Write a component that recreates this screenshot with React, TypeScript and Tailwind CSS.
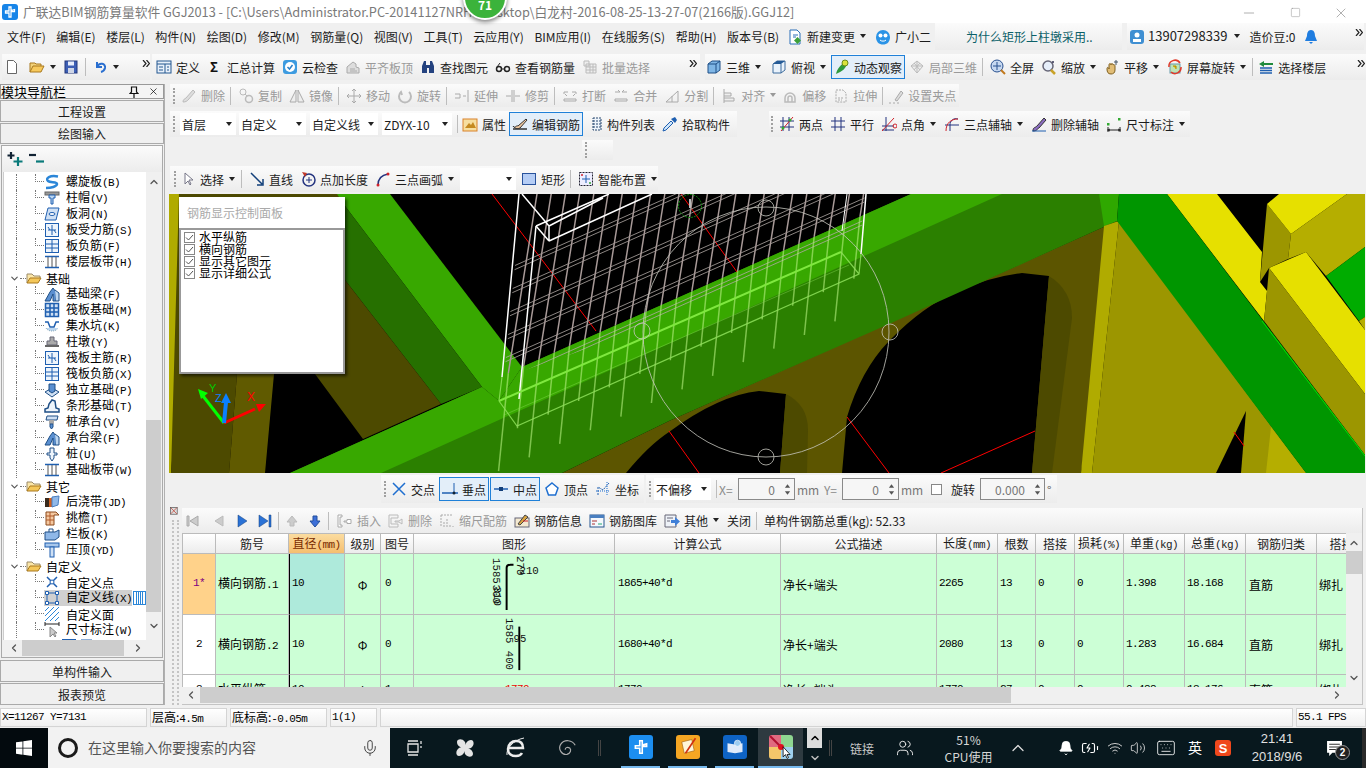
import React from 'react';
import { Mic, ChevronUp, ChevronDown, ChevronLeft, ChevronRight, Bell, Wifi, Volume2, Keyboard, BatteryCharging, Users, Minus, Square, X } from 'lucide-react';

const mono = "font-['Liberation_Mono',monospace]";
// 等宽小字，宽度按 6px 一个字符
const num = `${mono} text-[11px] tracking-[-0.6px]`;

// 工具栏图标
const ICONS: Record<string, React.ReactNode> = {
  new: <path d="M3.5 1.5h6l3 3v10h-9z" fill="#fff" stroke="#666" />,
  open: <><path d="M1 13V4h5l1 1h5v2" fill="#f3d27a" stroke="#a9791e" /><path d="M1 13l3-6h11l-3 6z" fill="#f7c95c" stroke="#a9791e" /></>,
  save: <><rect x="2" y="2" width="12" height="12" fill="#3d5fb5" stroke="#22367a" /><rect x="5" y="2.500" width="6" height="4" fill="#e8eefc" /><rect x="5" y="9" width="6" height="5" fill="#cfd6e6" /></>,
  undo: <path d="M5 3v5h5M5 8c2-5 9-4 8 1-.5 2-2 3.500-4 4" fill="none" stroke="#2a6fd0" strokeWidth="2" />,
  def: <><rect x="1" y="2" width="14" height="12" fill="#e8f0fa" stroke="#23578f" /><path d="M1 5h14M9 5v9M3 8h4M3 11h4M11 8h2M11 11h2" stroke="#23578f" /></>,
  sigma: <text x="3" y="12.500" fontSize="13" fontWeight="700" fill="#111">Σ</text>,
  cloud: <><rect x="1" y="1" width="14" height="14" rx="3" fill="#3d9be0" /><circle cx="8" cy="8" r="5" fill="#fff" /><path d="M5.500 8l2 2 3-4" fill="none" stroke="#2a7fc8" strokeWidth="1.500" /></>,
  flat: <path d="M2 14V8l6-5 3 2v3l3 1v5zM5 10h5M5 12h7" fill="#ddd" stroke="#aaa" />,
  bino: <path d="M2 14V7l2-5h2v4h4V2h2l2 5v7H9V9H7v5z" fill="#24427f" />,
  glasses: <><circle cx="4" cy="10" r="2.500" fill="none" stroke="#222" strokeWidth="1.500" /><circle cx="12" cy="10" r="2.500" fill="none" stroke="#222" strokeWidth="1.500" /><path d="M6.500 10h3M2 8l3-4" stroke="#222" /></>,
  batch: <path d="M2 2h5v5H2zM4 5h10v9H4zM4 8h10M4 11h10M8 5v9M11 5v9" fill="#eee" stroke="#bbb" />,
  cube: <><path d="M2 5l4-3h8v9l-4 3H2z" fill="#7fb6e6" stroke="#1f4f86" /><path d="M2 5h8v9M10 5l4-3" fill="none" stroke="#1f4f86" /></>,
  topv: <><path d="M2 5l4-3h8v9l-4 3H2z" fill="#e9f2fb" stroke="#3b6a9c" /><path d="M2 5l4-3h8l-4 3z" fill="#245a96" /><path d="M10 5v9" stroke="#3b6a9c" /></>,
  orbit: <><path d="M2 15C3 10 7 5 13 2c1 4-3 10-9 12z" fill="#2e9a3e" /><circle cx="11" cy="4" r="3" fill="#d9e23c" stroke="#6a8a1c" /></>,
  local: <path d="M2 7l6-5 6 5-6 7zM8 2v12M2 7h12M5 4l6 7M11 4l-6 7" fill="#eee" stroke="#bbb" />,
  full: <><circle cx="7" cy="7" r="6" fill="#c6d8f0" stroke="#29508f" /><path d="M7 3v8M3 7h8" stroke="#29508f" /><path d="M11 11l4 4" stroke="#c0781c" strokeWidth="2" /></>,
  zoom: <><circle cx="7" cy="7" r="5" fill="#e6eefa" stroke="#667" strokeWidth="1.500" /><path d="M10 11l4 4" stroke="#c9a227" strokeWidth="2.500" /><path d="M11 3h2M12 2v2" stroke="#335" /></>,
  pan: <><path d="M3 10c0-3 2-1 2 0V6c0-2 2-2 2 0 0-2 2-2 2 0 1-1 2 0 2 1v4c0 3-2 4-4 4-3 0-4-2-4-5z" fill="#e1bd76" stroke="#806020" /><path d="M12 1v5M10 3h4" stroke="#456" /></>,
  rot: <><rect x="3" y="5" width="10" height="9" fill="#bfe3b5" stroke="#69a" /><path d="M6 7h3v3" fill="#f0c000" stroke="#a80" /><path d="M2 8a6 6 0 0 1 11-4M14 8a6 6 0 0 1-10 5" fill="none" stroke="#e03a2a" strokeWidth="1.500" /></>,
  layers: <><path d="M1 5l5-3v2h9v2H6v2z" fill="#1f8a3c" /><path d="M2 9h12M2 11.500h12M2 14h12" stroke="#1f5fb0" strokeWidth="1.500" /></>,
  change: <><path d="M3 1h7l3 3v11H3z" fill="#fff" stroke="#2a6fb8" /><path d="M6 6h5M6 8h3" stroke="#2a6fb8" /><path d="M10.500 8l3.500 3.500-3.500 3.500L7 11.500z" fill="#3da13a" /></>,
  xiao: <><path d="M1 8a7 7 0 0 1 14 0c0 5-3 7.500-7 7.500S1 13 1 8z" fill="#2a93e6" /><circle cx="5.500" cy="6.500" r="2" fill="#fff" /><circle cx="10.500" cy="6.500" r="2" fill="#fff" /><path d="M5 11c1 1.500 5 1.500 6 0" stroke="#fff" fill="none" /></>,
  user: <><rect x="1" y="1" width="14" height="14" rx="3" fill="#3f8fd2" /><circle cx="8" cy="6" r="2.500" fill="#fff" /><rect x="4" y="10" width="8" height="3" fill="#fff" /></>,
  bellb: <path d="M8 1c3 0 4 3 4 6l2 5H2l2-5c0-3 1-6 4-6zM6 13h4l-2 2z" fill="#1f7de0" />,
  brush: <path d="M2 14c0-3 2-3 3-4l7-8 2 2-7 8c-1 1-2 2-5 2z" fill="#ddd" stroke="#bbb" />,
  copyc: <><circle cx="5" cy="4" r="3" fill="none" stroke="#bbb" /><circle cx="11" cy="11" r="3.500" fill="none" stroke="#bbb" strokeWidth="1.500" /><path d="M7 6l2 2" stroke="#bbb" /></>,
  mirror: <path d="M7 2v12H1zM9 2v12h6z" fill="#eee" stroke="#aaa" />,
  move: <path d="M8 1v14M1 8h14M6 3l2-2 2 2M6 13l2 2 2-2M3 6L1 8l2 2M13 6l2 2-2 2" fill="none" stroke="#aaa" />,
  rotg: <path d="M12 4a6 6 0 1 1-8 0l1 3" fill="none" stroke="#bbb" strokeWidth="2" />,
  extend: <path d="M1 6h5v4H1M9 8h3M14 2v12" fill="none" stroke="#aaa" />,
  trim: <path d="M1 8h5M10 8h5M7 2v12M9 2v12" fill="none" stroke="#aaa" />,
  brk: <path d="M2 4h4M10 4h4M2 4v2M14 4v2M2 11h12v2H2zM5 8l-2-2M11 8l2-2" fill="none" stroke="#aaa" />,
  merge: <path d="M2 4h5l-2-2M14 4H9l2-2M2 11h12v2H2z" fill="none" stroke="#aaa" />,
  split: <path d="M2 14l12-11v11zM8 8v6" fill="none" stroke="#aaa" />,
  align: <path d="M3 1v14M3 5h7v3H3M3 10h10v3H3" fill="#eee" stroke="#aaa" />,
  offset: <path d="M3 14v-4a5 5 0 0 1 10 0v4zM6 14v-4a2 2 0 0 1 4 0v4" fill="none" stroke="#bbb" strokeWidth="1.500" />,
  stretch: <path d="M3 2h7l3 3v9H3zM5 10h6M5 12h4" fill="#f4f4f4" stroke="#aaa" strokeDasharray="2 1" />,
  grip: <><path d="M1 15h2M5 15h2M9 15h2" stroke="#aaa" /><path d="M7 12l6-9 2 2-6 8z" fill="#ddd" stroke="#aaa" /></>,
  prop: <><rect x="1" y="3" width="14" height="12" fill="#f7dfa0" stroke="#d9822b" /><path d="M3 12l4-5 2 2 2-3 3 6" fill="#c58a20" /></>,
  edit: <><path d="M1 10c2 3 3-1 5 0l8-7 1 1-7 8c-2 1-5 1-7-2z" fill="#f0c8a0" stroke="#333" /><path d="M1 13h14" stroke="#333" strokeWidth="1.500" /></>,
  list: <path d="M2 3v0M2 6v0M2 9v0M2 12v0M6 2h8v12H6zM6 5h8M6 8h8M6 11h8" fill="#eef4fb" stroke="#27466f" strokeDasharray="2 1" />,
  pick: <><path d="M9 5l2 2-7 7-3 1 1-3z" fill="#cfe6fb" stroke="#1f5fb0" /><path d="M9 3l4 4 2-3-2-3z" fill="#1f5fb0" /></>,
  twop: <><path d="M4 1v14M10 1v14M1 5h14M1 11h14" stroke="#23337f" /><path d="M2 15L14 1" stroke="#d0222a" /><circle cx="4" cy="12" r="1.500" fill="#3a3" /><circle cx="11" cy="4" r="1.500" fill="#3a3" /></>,
  para: <path d="M5 1v14M11 1v14M1 5h14M1 11h14" stroke="#23337f" />,
  angle: <><path d="M5 1v14M1 10h12M1 14h12" stroke="#23337f" /><path d="M1 15L13 2" stroke="#d0222a" /><circle cx="14" cy="10" r="2" fill="none" stroke="#d0222a" /></>,
  arc3: <><path d="M6 15V9a6 6 0 0 1 8-6M1 9h14" fill="none" stroke="#23337f" /><path d="M2 15c0-8 5-12 12-12" fill="none" stroke="#d0222a" /></>,
  erase: <><path d="M2 15c0-4 2-3 4-5l7-8 2 2-7 8c-2 1-2 3-6 3z" fill="#8a6cc0" stroke="#333" /><path d="M1 15h14" stroke="#1f5fb0" /></>,
  dim: <><path d="M1 14h14M2 11v5M14 11v5M4 13l-2 1 2 1M12 13l2 1-2 1" fill="none" stroke="#222" /><rect x="1" y="7" width="2.500" height="2.500" fill="#3a3" /><rect x="12" y="2" width="2.500" height="2.500" fill="#3a3" /></>,
  cursor: <path d="M5 2v11l3-3 2 4 1-1-2-4h4z" fill="#fff" stroke="#778" />,
  linea: <path d="M2 2l11 11M8 14h6V8" fill="none" stroke="#123f7a" strokeWidth="1.500" />,
  ptadd: <><circle cx="9" cy="9" r="6" fill="none" stroke="#23337f" strokeWidth="1.500" /><path d="M9 6v6M6 9h6" stroke="#23337f" /><path d="M2 1l3 5 2-4" fill="#c0392b" /></>,
  arc: <><path d="M3 14C3 8 7 4 13 3" fill="none" stroke="#23337f" strokeWidth="1.500" /><circle cx="3" cy="14" r="1.500" fill="#d0222a" /><circle cx="13" cy="3" r="1.500" fill="#d0222a" /></>,
  rect: <rect x="1.500" y="2.500" width="13" height="11" fill="#b5cdf5" stroke="#28529c" />,
  smart: <><rect x="1.500" y="1.500" width="13" height="13" fill="#eef" stroke="#223" strokeDasharray="2 1" /><path d="M8 4v8M4 8h8" stroke="#1f5fb0" /><circle cx="4" cy="4" r="1" fill="#d0222a" /><circle cx="12" cy="12" r="1" fill="#3a3" /></>,
  cross: <path d="M2 2l12 12M14 2L2 14" stroke="#1f6fd0" strokeWidth="1.500" />,
  perp: <><path d="M0 12h16" stroke="#1f5fb0" strokeWidth="1.500" /><path d="M12 2v10" stroke="#1f5fb0" /><circle cx="12" cy="12" r="1.500" fill="#123" /></>,
  mid: <><path d="M1 8h14" stroke="#1f5fb0" strokeWidth="1.500" /><rect x="6" y="6" width="4" height="4" fill="#123f7a" /></>,
  penta: <path d="M8 2l6 5-2.500 7h-7L2 7z" fill="#fff" stroke="#1f6fd0" strokeWidth="1.500" />,
  coord: <><path d="M3 14V6l5 3 6-7" fill="none" stroke="#1f5fb0" strokeDasharray="2 1" /><path d="M1 10h14M12 1v14" stroke="#1f6fd0" strokeDasharray="1 1" /></>,
  first: <path d="M3 3h2v10H3zM14 3L6 8l8 5z" fill="#ccc" stroke="#aaa" />,
  prev: <path d="M12 3L4 8l8 5z" fill="#ccc" stroke="#bbb" />,
  next: <path d="M4 2l9 6-9 6z" fill="#2a72d6" stroke="#123f7a" strokeWidth=".5" />,
  last: <path d="M2 2l9 6-9 6zM12 2h2v12h-2z" fill="#2a72d6" stroke="#123f7a" strokeWidth=".5" />,
  up: <path d="M8 3l5 6h-3v4H6V9H3z" fill="#ccc" stroke="#bbb" />,
  down: <path d="M8 14L3 8h3V3h4v5h3z" fill="#3c6fd8" stroke="#234f9c" />,
  ins: <path d="M1 2h4v2H3v8h2v2H1zM7 8h3v-1.500h4v4h-4V9H7z" fill="#fff" stroke="#aaa" />,
  del: <path d="M1 2h9v3H3v6h7v3H1zM7 8h4l3-2v5l-3-2H7z" fill="#f4f4f4" stroke="#bbb" />,
  scale: <path d="M2 2h11M2 2v12M5 14V8M8 14V6M11 14v-3M14 14v-1" fill="none" stroke="#aaa" strokeDasharray="2 1" />,
  info: <><rect x="1" y="5" width="14" height="9" fill="#f4e9d0" stroke="#667" /><path d="M4 11l7-9 3 2-8 8z" fill="#d9a441" stroke="#444" /><path d="M9 8h5" stroke="#d0222a" /></>,
  lib: <><rect x="1" y="2" width="14" height="12" fill="#f5f8fc" stroke="#27568f" /><rect x="1" y="2" width="14" height="3" fill="#4a7fc0" /><path d="M3 8h5M3 11h3" stroke="#a33" /><path d="M9 11h4" stroke="#2a7" /></>,
  other: <><path d="M1 2h11v12H1z" fill="#eef2f8" stroke="#667" /><path d="M3 5h6M3 8h3" stroke="#667" /><path d="M7 7h4V4l5 4.500L11 13v-3H7z" fill="#3f7fd8" /></>,
  xbox: <><rect x="0.500" y="0.500" width="10" height="10" fill="#ddd" stroke="#555" /><path d="M1 1l9 9M10 1l-9 9" stroke="#c0392b" /></>,
  // 导航树
  spiral: <path d="M14 2.500C6 1 1 4 4 7c2 2 9 .5 9 3s-6 4-11 4" fill="none" stroke="#2b86d8" strokeWidth="2.500" />,
  capc: <><rect x="1" y="2" width="14" height="3" fill="#999" stroke="#666" /><path d="M5 5h6v3H9v6H7V8H5z" fill="#bcd6f0" stroke="#1f5fb0" /></>,
  holep: <><path d="M4 2h11l-3 12H1z" fill="#cfe0f4" stroke="#1f5fb0" /><ellipse cx="8" cy="8" rx="3" ry="1.500" fill="#fff" stroke="#1f5fb0" /></>,
  sq1: <><rect x="1.500" y="1.500" width="13" height="13" fill="#eef5fc" stroke="#1f5fb0" /><path d="M8 3v10M4 8h8M4 5l2 3M12 11l-2-3" stroke="#1f5fb0" /></>,
  sq2: <><rect x="1.500" y="1.500" width="13" height="13" fill="#eef5fc" stroke="#1f5fb0" /><path d="M2 6h12M2 10h12M8 2v12" stroke="#1f5fb0" /></>,
  band: <><path d="M1 2.500h14M1 13.500h14" stroke="#1f5fb0" strokeWidth="1.500" /><path d="M4 3v10M8 3v10M12 3v10" stroke="#555" /></>,
  folder: <><path d="M1 13V4h5l2 2h6v2" fill="#fbe6a8" stroke="#9a8a6a" /><path d="M1 13l3-5h11l-3 5z" fill="#f4c75a" stroke="#a9791e" /></>,
  beam: <><path d="M1 15l5-9 3-4 3 4v9h-3V8L6 15z" fill="#5a8fd0" stroke="#1f4f86" /><path d="M11 4l4 3v8h-3" fill="#bcd6f0" stroke="#1f4f86" /></>,
  raft: <><rect x="1.500" y="1.500" width="13" height="13" fill="#cfe0f4" stroke="#1f5fb0" strokeWidth="1.500" /><path d="M6 2v12M10 2v12M2 6h12M2 10h12" stroke="#1f5fb0" strokeWidth="1.500" /></>,
  pit: <><path d="M1 4h3l2 5h4l2-5h3" fill="none" stroke="#1f5fb0" strokeWidth="1.500" /><path d="M2 10c2 4 10 4 12 0" fill="#bcd6f0" stroke="#8ab" strokeDasharray="1 1" /></>,
  pier: <><path d="M6 3h4v4h3v4H3V7h3z" fill="#aaa" stroke="#667" /><rect x="1" y="11" width="14" height="2" fill="#666" /></>,
  iso: <><path d="M1 10l7-4 7 4-7 5z" fill="#cfe0f4" stroke="#1f4f86" /><path d="M5 2h6v7l-3 2-3-2z" fill="#5a8fd0" stroke="#1f4f86" /></>,
  strip: <path d="M1 14h14v-3l-3-1-1-7-3-1-3 4-1 4-3 1z" fill="#eef5fc" stroke="#1f4f86" strokeWidth="1.500" />,
  pile: <><path d="M3 2h11l-1 4H2z" fill="#cfe0f4" stroke="#1f4f86" /><rect x="5" y="6" width="5" height="4" fill="#aaa" /><path d="M6 10h3v3l-1.500 2L6 13z" fill="#5a8fd0" stroke="#1f4f86" /></>,
  pile2: <path d="M6 2h4v5h3v2h-3v3l-2 3-2-3V9H3V7h3z" fill="#eef5fc" stroke="#1f4f86" />,
  post: <><path d="M1 4h8v9H1z" fill="#3a2a1c" /><path d="M5 4h3v9H5z" fill="#d06020" /><path d="M8 3l7-1-1 9-6 2z" fill="#8fb8e8" stroke="#4a7fc0" /></>,
  eave: <><path d="M2 2h10l3 3h-5v10H2z" fill="#f4c8a0" stroke="#8a4a1c" /><path d="M2 6h8M2 10h8M6 2v13" stroke="#b05a2a" /></>,
  rail: <><path d="M1 6h10l4-2v7l-4 3H1z" fill="#8fb8e8" stroke="#1f4f86" /><path d="M5 6V3h4v3" fill="none" stroke="#1f4f86" /></>,
  press: <><rect x="1" y="1" width="14" height="4" fill="#a9c8ec" stroke="#1f5fb0" /><rect x="6" y="5" width="4" height="10" fill="#cfe0f4" stroke="#1f5fb0" /></>,
  cpt: <><path d="M3 3l10 10M13 3L3 13" stroke="#1f5fb0" strokeWidth="1.500" /><circle cx="8" cy="8" r="2" fill="#fff" stroke="#1f5fb0" /></>,
  cline: <><rect x="3" y="3" width="10" height="10" fill="none" stroke="#1f5fb0" /><path d="M1.500 1.500h3v3h-3zM11.500 1.500h3v3h-3zM1.500 11.500h3v3h-3zM11.500 11.500h3v3h-3z" fill="#fff" stroke="#1f5fb0" /></>,
  hatch: <path d="M1 5l4-4M1 10l9-9M1 15L15 1M6 15l9-9M11 15l4-4" stroke="#2b86d8" />,
  cdim: <><path d="M1 2h14M1 0v4M15 0v4" stroke="#222" /><path d="M6 5v10l3-3 2 3 1-1-2-3h3z" fill="#ccc" stroke="#888" /></>,
};

function Ic({ n, size = 'w-4 h-4' }: { n: string, size?: string }) {
  return <svg viewBox="0 0 16 16" className={`${size} shrink-0`}>{ICONS[n]}</svg>;
}

const Caret = ({ light }: { light?: boolean }) => (
  <svg viewBox="0 0 8 5" className="w-[8px] h-[5px] shrink-0"><path d="M1 0h6L4 4z" fill={light ? '#999' : '#222'} /></svg>
);

function Tool({ icon, label, gray, arrow, cn = '' }: { icon: string, label: string, gray?: boolean, arrow?: boolean, cn?: string }) {
  return (
    <div className={`flex items-center gap-[4px] whitespace-nowrap ${cn}`}>
      <Ic n={icon} />
      <span className={gray ? 'text-[#9a9a9a]' : 'text-[#1c1c1c]'}>{label}</span>
      {arrow && <Caret light={gray} />}
    </div>
  );
}

const Sep = () => <div className="w-px h-[18px] bg-[#bdbdbd] -ml-[2px] shrink-0" />;
const Handle = () => <div className="w-[2px] h-[16px] shrink-0 border-l-2 border-dotted border-[#a0a0a0]" />;

function Select({ w, label }: { w: string, label?: string }) {
  return (
    <div className={`${w} h-[22px] bg-white flex items-center justify-between pl-[2px] pr-[3px] shrink-0 whitespace-nowrap text-[#1c1c1c]`}>
      <span>{label}</span><Caret />
    </div>
  );
}

// 工具栏溢出按钮
const Chevrons = ({ cn = '' }: { cn?: string }) => (
  <svg viewBox="0 0 8 7" className={`w-[8px] h-[7px] shrink-0 self-start mt-[6px] ${cn}`}><path d="M1 0l3 3.500L1 7M4.500 0l3 3.500-3 3.500" fill="none" stroke="#222" strokeWidth="1.200" /></svg>
);

const bar = 'bg-linear-to-b from-[#fbfbfb] to-[#ececec] flex items-center shrink-0';
const active = 'border border-[#1f80d8] bg-[#e3eef9] -mx-[3px] px-[2px] h-[24px]';

const menus = ['文件(F)', '编辑(E)', '楼层(L)', '构件(N)', '绘图(D)', '修改(M)', '钢筋量(Q)', '视图(V)', '工具(T)', '云应用(Y)', 'BIM应用(I)', '在线服务(S)', '帮助(H)', '版本号(B)'];

function TopBars() {
  return (
    <>
      <div className="h-[23px] bg-white flex items-center relative shrink-0">
        <svg viewBox="0 0 16 16" className="w-4 h-4 ml-[2px] shrink-0">
          <rect width="16" height="16" rx="3" fill="#1684e8" />
          <path d="M7 3h2v3.500l3.500-1v2H9V13H7V9H3.500V7H7z" fill="none" stroke="#fff" strokeWidth="1.300" />
        </svg>
        <span className="ml-[5px] text-[#7a7a7a] text-[12.75px] whitespace-nowrap">广联达BIM钢筋算量软件 GGJ2013 - [C:\Users\Administrator.PC-20141127NRHI\Desktop\白龙村-2016-08-25-13-27-07(2166版).GGJ12]</span>
        <Minus className="w-4 h-4 text-[#888] absolute left-[1241px] top-[5px]" strokeWidth={1} />
        <Square className="w-[11px] h-[11px] text-[#888] absolute left-[1290px] top-[7px]" strokeWidth={1} />
        <X className="w-4 h-4 text-[#888] absolute left-[1333px] top-[5px]" strokeWidth={1} />
      </div>

      {/* 菜单行 */}
      <div className="h-[29px] flex items-center shrink-0 pl-[7px] pb-[2px] whitespace-nowrap text-[#1c1c1c]">
        <div className="flex gap-[10.6px] w-[780px] shrink-0">
          {menus.map((m) => <span key={m}>{m}</span>)}
        </div>
        <Tool icon="change" label="新建变更" arrow cn="w-[88px]" />
        <Tool icon="xiao" label="广小二" cn="w-[60px]" />
        <div className={`${bar} w-[187px] h-[27px] text-[#0b6068] pl-[31px]`}>为什么矩形上柱墩采用..</div>
        <div className={`${bar} w-[237px] h-[27px] ml-[5px] pl-[2px]`}>
          <Ic n="user" />
          <span className="ml-[3px] text-[13px] text-[#222]">13907298339</span>
          <div className="ml-[6px]"><Caret /></div>
          <span className="ml-[8px]">造价豆:0</span>
          <div className="ml-[8px]"><Ic n="bellb" /></div>
          <Chevrons cn="ml-[36px]" />
        </div>
      </div>

      {/* 主工具栏 */}
      <div className="h-[26px] mt-[2px] flex shrink-0">
        <div className={`${bar} w-[148px] ml-[2px] h-[26px] pl-[2px] gap-[6px]`}>
          <Ic n="new" />
          <div className="flex items-center gap-[4px] ml-[3px]"><Ic n="open" /><Caret /></div>
          <Ic n="save" />
          <div className="w-px h-[18px] bg-[#bdbdbd]" />
          <div className="flex items-center gap-[4px]"><Ic n="undo" /><Caret /></div>
          <Chevrons cn="ml-[16px]" />
        </div>
        <div className={`${bar} w-[548px] ml-[2px] h-[26px] pl-[4px] gap-[7px]`}>
          <Tool icon="def" label="定义" />
          <Tool icon="sigma" label="汇总计算" />
          <Tool icon="cloud" label="云检查" />
          <Tool icon="flat" label="平齐板顶" gray />
          <Tool icon="bino" label="查找图元" />
          <Tool icon="glasses" label="查看钢筋量" />
          <Tool icon="batch" label="批量选择" gray />
          <Chevrons cn="ml-[32px]" />
        </div>
        <div className={`${bar} w-[664px] ml-[5px] h-[26px] pl-[1px] gap-[7px]`}>
          <Tool icon="cube" label="三维" arrow />
          <Tool icon="topv" label="俯视" arrow cn="ml-[2px]" />
          <div className={active + ' flex items-center'}><Tool icon="orbit" label="动态观察" /></div>
          <Tool icon="local" label="局部三维" gray />
          <Sep />
          <Tool icon="full" label="全屏" />
          <Tool icon="zoom" label="缩放" arrow />
          <Tool icon="pan" label="平移" arrow />
          <Tool icon="rot" label="屏幕旋转" arrow />
          <Sep />
          <Tool icon="layers" label="选择楼层" cn="-ml-[2px]" />
          <Chevrons cn="ml-[24px]" />
        </div>
      </div>
    </>
  );
}

type Row = { t: string, k?: string, i: string, group?: boolean, sel?: boolean };

const tree: Row[] = [
  { t: '螺旋板', k: 'B', i: 'spiral' }, { t: '柱帽', k: 'V', i: 'capc' }, { t: '板洞', k: 'N', i: 'holep' },
  { t: '板受力筋', k: 'S', i: 'sq1' }, { t: '板负筋', k: 'F', i: 'sq2' }, { t: '楼层板带', k: 'H', i: 'band' },
  { t: '基础', i: 'folder', group: true },
  { t: '基础梁', k: 'F', i: 'beam' }, { t: '筏板基础', k: 'M', i: 'raft' }, { t: '集水坑', k: 'K', i: 'pit' },
  { t: '柱墩', k: 'Y', i: 'pier' }, { t: '筏板主筋', k: 'R', i: 'sq1' }, { t: '筏板负筋', k: 'X', i: 'sq2' },
  { t: '独立基础', k: 'P', i: 'iso' }, { t: '条形基础', k: 'T', i: 'strip' }, { t: '桩承台', k: 'V', i: 'pile' },
  { t: '承台梁', k: 'F', i: 'beam' }, { t: '桩', k: 'U', i: 'pile2' }, { t: '基础板带', k: 'W', i: 'band' },
  { t: '其它', i: 'folder', group: true },
  { t: '后浇带', k: 'JD', i: 'post' }, { t: '挑檐', k: 'T', i: 'eave' }, { t: '栏板', k: 'K', i: 'rail' }, { t: '压顶', k: 'YD', i: 'press' },
  { t: '自定义', i: 'folder', group: true },
  { t: '自定义点', i: 'cpt' }, { t: '自定义线', k: 'X', i: 'cline', sel: true }, { t: '自定义面', i: 'hatch' }, { t: '尺寸标注', k: 'W', i: 'cdim' },
];

function TreeRow({ r }: { r: Row }) {
  if (r.group) {
    return (
      <div className="h-4 flex items-center whitespace-nowrap">
        <ChevronDown className="w-[11px] h-[11px] ml-[5px] text-[#555] shrink-0" strokeWidth={2.500} />
        <div className="w-[6px] border-b border-dotted border-[#777]" />
        <Ic n={r.i} />
        <span className="ml-[4px] text-black">{r.t}</span>
      </div>
    );
  }
  return (
    <div className="h-4 flex items-stretch whitespace-nowrap">
      <div className="w-[12px] shrink-0" />
      <div className="w-[19px] border-l border-dotted border-[#777] shrink-0" />
      <div className="w-[9px] h-[8px] border-l border-b border-dotted border-[#777] shrink-0" />
      <div className={`flex items-center h-4 ${r.sel ? 'bg-[#d0d0d0] w-[88px]' : ''}`}>
        <Ic n={r.i} />
        <span className="ml-[6px] text-black">{r.t}{r.k && <span className={num}>({r.k})</span>}</span>
      </div>
      {r.sel && (
        <div className="w-[13px] h-[14px] mt-px ml-px border border-[#2b86d8] flex justify-around px-[1px] shrink-0">
          <div className="w-[3px] border-x border-[#2b86d8]" /><div className="w-[3px] border-x border-[#2b86d8]" />
        </div>
      )}
    </div>
  );
}

function SideNav() {
  const btn = 'border border-[#aaa] flex items-center justify-center text-[#1c1c1c] shrink-0';
  return (
    <div className="w-[165px] h-[621px] shrink-0 flex flex-col border-r border-[#b0b0b0]">
      <div className="h-[15px] border border-[#999] flex items-center justify-between text-[13px] leading-none text-black shrink-0 pr-[4px] bg-[#f4f4f4]">
        <span>模块导航栏</span>
        <div className="flex items-center gap-[9px]">
          <svg viewBox="0 0 10 12" className="w-[10px] h-[12px]"><path d="M2.500 1h5v5l1.500 1.500H1L2.500 6zM5 7.500V12" fill="none" stroke="#111" strokeWidth="1.200" /></svg>
          <X className="w-[11px] h-[11px]" strokeWidth={1.500} />
        </div>
      </div>
      <div className={`${btn} h-[22px] mt-[1px]`}>工程设置</div>
      <div className={`${btn} h-[21px] mt-[1px]`}>绘图输入</div>
      <div className="flex-1 border border-[#aaa] mt-[1px] mb-[2px] mx-[1px] flex flex-col min-h-0">
        <div className={`${bar} h-[26px] pl-[5px] gap-[3px]`}>
          <svg viewBox="0 0 18 16" className="w-[18px] h-[16px]"><path d="M4 1v7M.5 4.500h7" stroke="#123" strokeWidth="2.200" fill="none" /><path d="M11 6v9M6.500 10.500h9" stroke="#0a7a7a" strokeWidth="2.200" fill="none" /></svg>
          <svg viewBox="0 0 18 16" className="w-[18px] h-[16px]"><path d="M1 4h7" stroke="#123" strokeWidth="2.200" /><path d="M8 10.500h8" stroke="#0a7a7a" strokeWidth="2.200" /></svg>
        </div>
        <div className="flex-1 flex min-h-0 mx-[1px]">
          <div className="w-[143px] bg-white overflow-hidden pt-[2px] border-l border-[#ccc]">
            {tree.map((r) => <TreeRow key={r.t + r.k + r.i} r={r} />)}
            <div className="h-4 flex items-center pl-[41px]"><Ic n="folder" /><Ic n="sq2" /><Ic n="holep" /></div>
          </div>
          <div className="w-[15px] bg-[#f0f0f0] flex flex-col items-center shrink-0 pt-[4px]">
            <ChevronUp className="w-3 h-3 text-[#555] shrink-0" strokeWidth={2.500} />
            <div className="h-[232px] shrink-0" />
            <div className="flex-1 w-full bg-[#cdcdcd]" />
            <ChevronDown className="w-3 h-3 text-[#555] shrink-0 my-[8px]" strokeWidth={2.500} />
          </div>
        </div>
        <div className="h-[16px] bg-[#f0f0f0] flex items-center shrink-0 mb-[1px]">
          <ChevronLeft className="w-3 h-3 ml-[6px] text-[#555] shrink-0" strokeWidth={2.500} />
          <div className="w-[102px] h-full bg-[#cdcdcd] ml-[2px]" />
          <ChevronRight className="w-3 h-3 ml-[8px] text-[#555] shrink-0" strokeWidth={2.500} />
        </div>
      </div>
      <div className={`${btn} h-[22px]`}>单构件输入</div>
      <div className={`${btn} h-[22px] mt-[1px]`}>报表预览</div>
    </div>
  );
}

// 钢筋网
const bars = Array.from({ length: 24 }, (_, i) => {
  const xt = 538 + 14.2 * i;
  const ye = (585.9 - 0.445 * xt) / 0.9288;
  const xe = xt - 0.16 * (ye - 194);
  const len = i % 2 ? 62 : 98;
  return { xt, xe, ye, x2: xe - 0.1 * len, y2: ye + len };
});
const meshY = [197, 201, 219, 223, 241, 245, 263, 267, 285, 289, 307, 311];

function Scene() {
  return (
    <svg viewBox="170 194 1196 279" className="w-full h-full block">
      <rect x="170" y="194" width="1196" height="279" fill="#000" />
      <polygon points="170,194 185,194 180,374 172,473 170,473" fill="#b0ab00" />
      <polygon points="180,194 346,194 346,374 238,374 230,473 172,473" fill="#4d4a00" />
      <polygon points="238,374 275,374 266,473 230,473" fill="#605a00" />
      <polygon points="338,194 391,194 523,367 500,401 483,387 346,206" fill="#38a800" />
      <polygon points="346,206 483,387 442,404 346,280" fill="#267000" />
      <polygon points="346,280 442,404 364,439 316,374 346,374" fill="#4d4a00" />
      {/* 下方拱 */}
      <polygon points="563,473 670,421 1118,221 1082,473" fill="#5c5500" />
      <path d="M843 473 L848 417 Q862 370 890 341 Q925 305 960 291 Q990 277 1023 273 L1050 276 L1033 473 Z" fill="#000" />
      <path d="M1050 276 Q1073 290 1073 318 L1053 473 L1033 473 Z" fill="#4d4a00" />
      <path d="M627 473 Q650 445 670 432 Q720 395 760 391 L787 394 L781 473 Z" fill="#000" />
      <path d="M787 394 Q809 405 809 430 L808 473 L781 473 Z" fill="#4d4a00" />
      {/* 主梁 */}
      <polygon points="291,473 483,387 500,401 523,367 912,194 1100,194 1118,221 890,324 670,421 563,473" fill="#2b8000" />
      <polygon points="291,473 483,387 500,401 523,367 912,194 1003,194 382,473" fill="#38a800" />
      <polygon points="1100,194 1120,194 1118,221 1105,226" fill="#2fa800" />
      {/* 右侧黄色构件 */}
      <polygon points="1120,221 1307,473 1093,473" fill="#9c9600" />
      <polygon points="1105,226 1120,221 1093,473 1082,473" fill="#b0ab00" />
      <polygon points="1247,411 1217,473 1242,473" fill="#000" />
      <polygon points="1272,427 1307,473 1267,473" fill="#b5ae00" />
      <polygon points="1168,194 1218,194 1263,252 1261,282 1268,291 1265,321" fill="#e6e000" />
      <polygon points="1268,204 1292,234 1289,259 1270,268 1261,282" fill="#9c9600" />
      <polygon points="1268,204 1280,194 1348,194 1292,234" fill="#e6e000" />
      <polygon points="1292,234 1348,194 1366,194 1366,247 1327,276 1307,252 1289,259" fill="#b5ae00" />
      <polygon points="1366,247 1327,276 1360,321 1366,317" fill="#00ac00" />
      <polygon points="1360,321 1366,317 1366,330" fill="#b5ae00" />
      <polygon points="1270,268 1307,252 1366,330 1366,394" fill="#e6e000" />
      <polygon points="1270,268 1366,394 1366,455 1265,321 1268,291" fill="#9c9600" />
      <polygon points="1120,194 1168,194 1366,455 1366,473 1307,473 1118,221" fill="#009600" />
      <line x1="1263" y1="321" x2="1366" y2="456" stroke="#00e000" />
      {/* 红线 */}
      <g stroke="#f00" strokeWidth="1" fill="none">
        <line x1="493" y1="194" x2="597" y2="331" />
        <line x1="682" y1="194" x2="738" y2="272" />
        <line x1="670" y1="431" x2="700" y2="473" />
        <line x1="848" y1="417" x2="890" y2="473" />
        <line x1="1036" y1="431" x2="942" y2="473" />
        <line x1="1235" y1="432" x2="1245" y2="446" />
      </g>
      {/* 钢筋网 */}
      <clipPath id="wall"><polygon points="523,194 505,377 860,256 866,194" /></clipPath>
      <g clipPath="url(#wall)" stroke="#b0a8a4" strokeWidth="1" opacity=".8">
        {meshY.map((y) => <line key={y} x1="500" y1={y + 75.6} x2="870" y2={y - 89} />)}
      </g>
      {bars.map((b) => (
        <g key={b.xt} strokeWidth="1.500">
          <line x1={b.xt} y1="194" x2={b.xe} y2={b.ye} stroke="#a89a98" />
          <line x1={b.xe} y1={b.ye} x2={b.x2} y2={b.y2} stroke="#b6f080" opacity=".6" />
        </g>
      ))}
      <g stroke="#fff" fill="none">
        <path d="M520 194L503 377M537 226L520 399M867 194L862 254" strokeWidth="1.500" />
        <path d="M848 194L843 231" />
        <path d="M537 226L610 194M550 241L653 194M550 226L604 198M537 226L550 241M550 226V241M523 194L550 226" strokeWidth="1.500" />
      </g>
      <g fill="none" stroke="#8ee05a">
        <path d="M500 401L518 426L860 274L862 254M842 252L860 274M500 401L503 377" strokeWidth="1.200" opacity=".85" />
        <path d="M500 401L842 252" stroke="#7fe83f" strokeWidth="2" />
        <path d="M505 415L850 265" strokeWidth="1" opacity=".4" />
      </g>
      {/* 圆 */}
      <g fill="none" stroke="#c8c8c0" strokeWidth="1" opacity=".8">
        <ellipse cx="767" cy="332" rx="123" ry="125" />
        <circle cx="767" cy="457" r="8" />
        <circle cx="891" cy="332" r="8" />
        <circle cx="643" cy="331" r="8" />
        <circle cx="767" cy="208" r="8" />
      </g>
      <circle cx="691" cy="206" r="11.500" fill="none" stroke="#0a8a0a" strokeDasharray="2 1" />
      <path d="M691 199v9" stroke="#bbb" strokeWidth="2" />
      {/* 坐标轴 */}
      <g strokeWidth="3" fill="none">
        <line x1="225" y1="423" x2="204" y2="396" stroke="#0f0" />
        <line x1="225" y1="423" x2="256" y2="409" stroke="#f00" />
        <line x1="225" y1="423" x2="227" y2="402" stroke="#0a80ff" strokeWidth="4" />
      </g>
      <polygon points="199,389 209,393 202,399" fill="#0f0" />
      <polygon points="267,404 257,404 260,412" fill="#f00" />
      <polygon points="227,393 222,403 232,403" fill="#0a80ff" />
      <text x="248" y="401" fontSize="12" fill="#f00" className="font-['Liberation_Sans',sans-serif]">X</text>
      <text x="210" y="392" fontSize="11" fill="#0c0" className="font-['Liberation_Sans',sans-serif]">Y</text>
      <text x="216" y="402" fontSize="11" fill="#0a80ff" className="font-['Liberation_Sans',sans-serif]">Z</text>
    </svg>
  );
}

function RebarPanel() {
  const items = ['水平纵筋', '横向钢筋', '显示其它图元', '显示详细公式'];
  return (
    <div className="absolute left-[10px] top-[3px] w-[166px] h-[177px] bg-white shadow-[2px_2px_3px_rgba(0,0,0,.6)] flex flex-col">
      <div className="h-[31px] pl-[8px] flex items-center text-[12px] text-[#aaa] shrink-0">钢筋显示控制面板</div>
      <div className="flex-1 border-2 border-[#999] pl-[3px] pt-[1px]">
        {items.map((t) => (
          <div key={t} className="h-[12px] flex items-center gap-[4px] leading-[12px] text-black whitespace-nowrap">
            <svg viewBox="0 0 11 11" className="w-[11px] h-[11px] shrink-0"><rect x=".5" y=".5" width="10" height="10" fill="#fff" stroke="#888" /><path d="M2 5.500l2.500 2.500 4.500-5" fill="none" stroke="#555" /></svg>
            <span>{t}</span>
          </div>
        ))}
      </div>
    </div>
  );
}

function NumInput({ w, v }: { w: string, v: string }) {
  return (
    <div className={`${w} h-[22px] border border-[#8a8a8a] bg-[#f6f6f6] flex items-center justify-end shrink-0`}>
      <span className="text-[#777] mr-[9px]">{v}</span>
      <div className="flex flex-col gap-[3px] mr-[3px]">
        <svg viewBox="0 0 8 4" className="w-[7px] h-[4px]"><path d="M4 0l3 4H1z" fill="#555" /></svg>
        <svg viewBox="0 0 8 4" className="w-[7px] h-[4px]"><path d="M4 4L1 0h6z" fill="#555" /></svg>
      </div>
    </div>
  );
}

function SnapBar() {
  return (
    <div className="h-[28px] mt-[2px] flex shrink-0 pl-[212px]">
      <div className={`${bar} w-[263px] pl-[3px] gap-[7px] h-[28px]`}>
        <Handle />
        <Tool icon="cross" label="交点" cn="-ml-[2px]" />
        <div className={active + ' flex items-center'}><Tool icon="perp" label="垂点" /></div>
        <div className={active + ' flex items-center'}><Tool icon="mid" label="中点" /></div>
        <Tool icon="penta" label="顶点" />
        <Tool icon="coord" label="坐标" />
      </div>
      <div className={`${bar} w-[411px] ml-[2px] pl-[3px] h-[28px]`}>
        <Handle />
        <div className="ml-[3px]"><Select w="w-[57px]" label="不偏移" /></div>
        <div className="w-px h-[18px] bg-[#bdbdbd] ml-[5px]" />
        <span className="ml-[2px] text-[#8a8a8a] w-[19px]">X=</span>
        <NumInput w="w-[57px]" v="0" />
        <span className={`ml-[2px] text-[#777] w-[27px]`}>mm</span>
        <span className="text-[#8a8a8a] w-[18px]">Y=</span>
        <NumInput w="w-[57px]" v="0" />
        <span className="ml-[2px] text-[#777] w-[30px]">mm</span>
        <div className="w-[11px] h-[11px] border border-[#888] bg-white shrink-0" />
        <span className="ml-[9px] text-[#1c1c1c]">旋转</span>
        <div className="ml-[5px]"><NumInput w="w-[65px]" v="0.000" /></div>
        <span className="ml-[2px] text-[#555]">°</span>
      </div>
    </div>
  );
}

const cols = 'grid-cols-[33px_73px_56px_36px_33px_201px_166px_156px_61px_38px_39px_49px_61px_61px_71px_74px]';
const cell = 'border-r border-b border-[#bbb] flex items-center overflow-hidden whitespace-nowrap';
const heads: [string, string?][] = [['', ''], ['筋号'], ['直径', 'mm'], ['级别'], ['图号'], ['图形'], ['计算公式'], ['公式描述'], ['长度', 'mm'], ['根数'], ['搭接'], ['损耗', '%'], ['单重', 'kg'], ['总重', 'kg'], ['钢筋归类'], ['搭接形式']];

type Data = { idx: string, name: string, d: string, f: string, len: string, n: string, w1: string, w2: string, tail: string };
const rows: Data[] = [
  { idx: '1*', name: '横向钢筋.1', d: '0', f: '1865+40*d', len: '2265', n: '13', w1: '1.398', w2: '18.168', tail: '直筋' },
  { idx: '2', name: '横向钢筋.2', d: '0', f: '1680+40*d', len: '2080', n: '13', w1: '1.283', w2: '16.684', tail: '直筋' },
  { idx: '3', name: '水平纵筋.1', d: '1', f: '1770', len: '1770', n: '27', w1: '0.488', w2: '13.176', tail: '直筋' },
];

function Fig({ i }: { i: number }) {
  if (i === 0) {
    return (
      <svg className={`w-full h-full ${mono}`} viewBox="0 0 201 61" fontSize="11" fill="#111">
        <path d="M93 57V14q0-3 4-3h3" stroke="#000" strokeWidth="2" fill="none" />
        <text transform="translate(79 4) rotate(90)">1585</text>
        <text transform="translate(79 31) rotate(90)">300</text>
        <text transform="translate(80 33) rotate(90)">310</text>
        <text transform="translate(104 2) rotate(90)">270</text>
        <text x="106" y="20">210</text>
      </svg>
    );
  }
  if (i === 1) {
    return (
      <svg className={`w-full h-full ${mono}`} viewBox="0 0 201 61" fontSize="11" fill="#111">
        <path d="M106 57V12" stroke="#000" strokeWidth="2" fill="none" />
        <text transform="translate(92 3) rotate(90)">1585</text>
        <text x="100" y="28">95</text>
        <text transform="translate(92 37) rotate(90)">400</text>
      </svg>
    );
  }
  return <div className={`${num} text-[#e00] pl-[91px]`}>1770</div>;
}

function Table() {
  return (
    <div className="flex">
      <div className={`w-[1164px] h-[154px] overflow-hidden grid ${cols} grid-rows-[20px_61px_60px_30px] bg-white border-t border-l border-[#bbb] shrink-0`}>
        {heads.map(([t, u], i) => (
          <div key={i} className={`${cell} justify-center ${i === 2 ? 'bg-linear-to-b from-[#fbdca0] to-[#f5bf6f] text-[#7a2b00]' : 'bg-linear-to-b from-white to-[#ececec] text-[#1c1c1c]'}`}>
            <span>{t}{u && <span className={num}>({u})</span>}</span>
          </div>
        ))}
        {rows.map((r, i) => (
          <React.Fragment key={r.idx}>
            <div className={`${cell} justify-center ${num} ${i === 0 ? 'bg-[#ffd28a] text-[#800080]' : 'bg-white text-black'}`}>{r.idx}</div>
            <div className={`${cell} pl-[2px] bg-[#ccffd6] text-black`}><span>{r.name.slice(0, -2)}<span className={num}>{r.name.slice(-2)}</span></span></div>
            <div className={`${cell} pl-[2px] border-l border-l-black ${num} ${i === 0 ? 'bg-[#aeeadb]' : 'bg-[#ccffd6]'}`}>10</div>
            <div className={`${cell} justify-center bg-[#ccffd6] text-[12px]`}>Φ</div>
            <div className={`${cell} pl-[4px] bg-[#ccffd6] ${num}`}>{r.d}</div>
            <div className={`${cell} bg-[#ccffd6]`}><Fig i={i} /></div>
            <div className={`${cell} pl-[3px] bg-[#ccffd6] ${num}`}>{r.f}</div>
            <div className={`${cell} pl-[2px] bg-[#ccffd6]`}>净长+端头</div>
            <div className={`${cell} pl-[2px] bg-[#ccffd6] ${num}`}>{r.len}</div>
            <div className={`${cell} pl-[2px] bg-[#ccffd6] ${num}`}>{r.n}</div>
            <div className={`${cell} pl-[2px] bg-[#ccffd6] ${num}`}>0</div>
            <div className={`${cell} pl-[2px] bg-[#ccffd6] ${num}`}>0</div>
            <div className={`${cell} pl-[2px] bg-[#ccffd6] ${num}`}>{r.w1}</div>
            <div className={`${cell} pl-[2px] bg-[#ccffd6] ${num}`}>{r.w2}</div>
            <div className={`${cell} pl-[3px] bg-[#ccffd6]`}>{r.tail}</div>
            <div className={`${cell} pl-[2px] bg-[#ccffd6]`}>绑扎</div>
          </React.Fragment>
        ))}
      </div>
      <div className="w-[16px] h-[154px] bg-[#f0f0f0] flex flex-col items-center shrink-0">
        <ChevronUp className="w-3 h-3 text-[#555] mt-[4px] shrink-0" strokeWidth={2.500} />
        <div className="w-full h-[23px] bg-[#cdcdcd] mt-[2px] shrink-0" />
        <div className="flex-1" />
        <ChevronDown className="w-3 h-3 text-[#555] mb-[3px] shrink-0" strokeWidth={2.500} />
      </div>
    </div>
  );
}

function GridPanel() {
  return (
    <div className="flex mt-[2px] h-[200px] shrink-0">
      <div className="w-[13px] shrink-0 flex flex-col items-center">
        <div className="mt-[2px]"><Ic n="xbox" size="w-[11px] h-[11px]" /></div>
        <div className="flex-1 mt-[2px] w-[7px] border-x-2 border-dotted border-[#c4c4c4]" />
      </div>
      <div className="w-[1181px] shrink-0 flex flex-col border-r border-b border-[#c4c4c4] mt-[3px]">
        <div className={`${bar} h-[25px] pl-[2px] gap-[7px]`}>
          <Ic n="first" />
          <div className="ml-[4px]"><Ic n="prev" /></div>
          <Ic n="next" />
          <Ic n="last" />
          <Sep />
          <div className="-ml-[2px]"><Ic n="up" /></div>
          <Ic n="down" />
          <Sep />
          <Tool icon="ins" label="插入" gray cn="ml-[1px]" />
          <Tool icon="del" label="删除" gray />
          <Tool icon="scale" label="缩尺配筋" gray />
          <Tool icon="info" label="钢筋信息" />
          <Tool icon="lib" label="钢筋图库" />
          <Tool icon="other" label="其他" arrow />
          <span className="text-[#1c1c1c]">关闭</span>
          <Sep />
          <span className="text-[#1c1c1c] whitespace-nowrap">单构件钢筋总重(kg): 52.33</span>
        </div>
        <Table />
        <div className="h-[16px] bg-[#f0f0f0] flex items-center shrink-0">
          <ChevronLeft className="w-3 h-3 ml-[3px] text-[#555] shrink-0" strokeWidth={2.500} />
          <div className="w-[811px] h-full bg-[#cdcdcd] ml-[3px]" />
          <ChevronRight className="w-3 h-3 ml-[320px] text-[#555] shrink-0" strokeWidth={2.500} />
        </div>
      </div>
    </div>
  );
}

function StatusBar() {
  const s = 'h-[19px] border border-[#d4d4d4] bg-linear-to-b from-white to-[#f0f0f0] flex items-center pl-[1px] text-black whitespace-nowrap shrink-0';
  return (
    <div className="h-[19px] mt-[3px] flex gap-[3px] shrink-0">
      <div className={`${s} w-[147px] ${num}`}>X=11267 Y=7131</div>
      <div className={`${s} w-[77px]`}><span>层高:<span className={num}>4.5m</span></span></div>
      <div className={`${s} w-[97px]`}><span>底标高:<span className={num}>-0.05m</span></span></div>
      <div className={`${s} w-[47px] ${num}`}>1(1)</div>
      <div className={`${s} w-[913px]`} />
      <div className={`${s} w-[70px] ${num}`}>55.1 FPS</div>
    </div>
  );
}

function AppTile({ color, children }: { color: string, children: React.ReactNode }) {
  return <div className={`w-6 h-6 rounded-[3px] ${color} flex items-center justify-center overflow-hidden`}>{children}</div>;
}

const slot = 'h-full flex items-center justify-center shrink-0';
const pinned = 'h-full flex items-center justify-center border-b-[2px] border-[#76b9ed] shrink-0';

function Taskbar() {
  return (
    <div className="h-[40px] mt-[1px] bg-[#08181e] flex items-stretch text-[#e6e6e6] shrink-0">
      <div className={`${slot} w-[48px] bg-[#030a0e]`}>
        <svg viewBox="0 0 16 16" className="w-4 h-4"><path d="M0 2.300l6.500-.9v6.300H0zM7.300 1.300L16 0v7.700H7.300zM0 8.400h6.500v6.300L0 13.800zM7.300 8.400H16V16l-8.700-1.200z" fill="#fff" /></svg>
      </div>
      <div className="w-[342px] bg-[#f2f2f2] flex items-center shrink-0">
        <div className="ml-[10px] w-[20px] h-[20px] rounded-full border-[3px] border-[#1a1a1a] shrink-0" />
        <span className="ml-[10px] text-[14px] text-[#555] whitespace-nowrap">在这里输入你要搜索的内容</span>
        <Mic className="ml-[105px] w-[18px] h-[18px] text-[#444] shrink-0" strokeWidth={1.300} />
      </div>
      <div className={`${slot} w-[50px]`}>
        <svg viewBox="0 0 18 16" className="w-[18px] h-4"><path d="M2 1h10M2 4h10v8H2zM2 15h10M15 1v3M15 6v2" fill="none" stroke="#e6e6e6" strokeWidth="1.300" /></svg>
      </div>
      <div className={`${slot} w-[50px]`}>
        <svg viewBox="0 0 22 22" className="w-[22px] h-[22px]"><path d="M11 11C7 11 3 9 3 5c0-3 5-4 8 0 1 2 0 4 0 6zm0 0c0-4 2-8 6-8 3 0 4 5 0 8-2 1-4 0-6 0zm0 0c4 0 8 2 8 6 0 3-5 4-8 0-1-2 0-4 0-6zm0 0c0 4-2 8-6 8-3 0-4-5 0-8 2-1 4 0 6 0z" fill="#e4e4e4" /></svg>
      </div>
      <div className={`${slot} w-[52px]`}>
        <svg viewBox="0 0 22 22" className="w-[22px] h-[22px]"><path d="M4 11h14c0-5-3-7-7-7s-8 3-8 8 4 7 8 7c3 0 5-1 6-3" fill="none" stroke="#ececec" strokeWidth="2.500" /><path d="M2 18C1 12 8 3 19 1" fill="none" stroke="#ececec" strokeWidth="1" /></svg>
      </div>
      <div className={`${slot} w-[50px]`}>
        <svg viewBox="0 0 22 22" className="w-5 h-5"><path d="M20 8C17 2 8 1 4 7c-3 5 1 12 7 11 4-1 5-5 3-7-2-1-5-1-5 2" fill="none" stroke="#aaa" strokeWidth="1.300" /></svg>
      </div>
      <div className={`${slot} w-[14px]`}><div className="w-[3px] h-[16px] border-x border-[#444]" /></div>
      <div className="w-[15px] shrink-0" />
      <div className={`${pinned} w-[39px]`}>
        <AppTile color="bg-[#1c8ef0]"><svg viewBox="0 0 16 16" className="w-5 h-5"><path d="M7 3h2v3.500l3.500-1v2H9V13H7V9H3.500V7H7z" fill="none" stroke="#fff" strokeWidth="1.300" /></svg></AppTile>
      </div>
      <div className="w-[8px] shrink-0" />
      <div className={`${pinned} w-[39px]`}>
        <AppTile color="bg-[#f5a623]"><svg viewBox="0 0 16 16" className="w-5 h-5"><path d="M3 4l8-2 2 9-8 2z" fill="#fff6d8" stroke="#a06010" strokeWidth=".5" /><path d="M6 13L14 1" stroke="#d03010" strokeWidth="1.300" /></svg></AppTile>
      </div>
      <div className="w-[8px] shrink-0" />
      <div className={`${pinned} w-[39px]`}>
        <AppTile color="bg-[#0e63c4]"><svg viewBox="0 0 16 16" className="w-5 h-5"><path d="M2 5l6 1 6-1v7l-6 1-6-1z" fill="#dfeafa" /><circle cx="10" cy="5" r="2.500" fill="#9ccbf0" stroke="#fff" strokeWidth=".5" /></svg></AppTile>
      </div>
      <div className="w-[4px] shrink-0" />
      <div className={`${pinned} w-[45px] bg-[#2e3a40] relative`}>
        <svg viewBox="0 0 24 24" className="w-6 h-6 rounded-[3px]">
          <rect width="12" height="12" fill="#e06a80" /><rect x="12" width="12" height="12" fill="#8fd690" /><rect y="12" width="12" height="12" fill="#f4c66a" /><rect x="12" y="12" width="12" height="12" fill="#9fd0ee" />
          <path d="M1 1l11 11" stroke="#b01030" strokeWidth="2" /><circle cx="12" cy="12" r="3" fill="#e01020" />
        </svg>
        <svg viewBox="0 0 12 18" className="w-[10px] h-[14px] absolute left-[24px] top-[18px]"><path d="M1 1v13l3-3 2 5 2-1-2-4h4z" fill="#fff" stroke="#000" /></svg>
      </div>
      <div className="w-[4px] shrink-0" />
      <div className="w-[15px] flex flex-col shrink-0">
        <div className="h-[20px] bg-[#dcdcdc] flex items-center justify-center"><ChevronUp className="w-3 h-3 text-black" strokeWidth={3} /></div>
        <div className="flex-1 flex items-center justify-center"><ChevronDown className="w-3 h-3 text-[#bbb]" strokeWidth={3} /></div>
      </div>
      <div className={`${slot} w-[16px]`}><div className="w-[3px] h-[16px] border-x border-[#444]" /></div>
      <div className={`${slot} w-[36px] text-[12px] text-[#c8c8c8] justify-end`}>链接</div>
      <div className={`${slot} w-[61px]`}><Users className="w-[18px] h-[18px] text-[#e6e6e6]" strokeWidth={1.300} /></div>
      <div className={`${slot} w-[67px] flex-col text-[12px] leading-[17px] text-[#d8d8d8]`}>
        <span>51%</span><span>CPU使用</span>
      </div>
      <div className={`${slot} w-[32px]`}><ChevronUp className="w-5 h-5 text-[#ddd]" strokeWidth={1.500} /></div>
      <div className="w-[20px] shrink-0" />
      <div className={`${slot} w-[24px]`}><Bell className="w-4 h-4 text-white fill-white" strokeWidth={1} /></div>
      <div className={`${slot} w-[24px]`}><BatteryCharging className="w-[18px] h-[18px] text-white" strokeWidth={1.500} /></div>
      <div className={`${slot} w-[25px]`}><Wifi className="w-4 h-4 text-[#ccc]" strokeWidth={1.500} /></div>
      <div className={`${slot} w-[22px]`}><Volume2 className="w-4 h-4 text-[#ddd]" strokeWidth={1.300} /></div>
      <div className={`${slot} w-[34px]`}><Keyboard className="w-[22px] h-[20px] text-white" strokeWidth={1} /></div>
      <div className={`${slot} w-[24px] text-[14px] text-white`}>英</div>
      <div className={`${slot} w-[32px]`}>
        <div className="w-4 h-4 rounded-[3px] bg-[#f0481c] text-white text-[13px] font-bold flex items-center justify-center leading-none font-['Liberation_Sans',sans-serif]">S</div>
      </div>
      <div className={`${slot} w-[76px] flex-col text-[13px] leading-[18px] text-[#e0e0e0] font-['Liberation_Sans',sans-serif]`}>
        <span>21:41</span><span>2018/9/6</span>
      </div>
      <div className={`${slot} w-[38px] relative`}>
        <svg viewBox="0 0 16 16" className="w-[17px] h-[17px]"><path d="M1 1h14v11H6l-3 3v-3H1z" fill="#fff" /><path d="M3 4h10M3 6.500h10M3 9h7" stroke="#333" /></svg>
        <div className="absolute left-[20px] top-[17px] w-[15px] h-[15px] rounded-full bg-[#222] border border-[#999] text-[10px] font-bold text-white flex items-center justify-center leading-none font-['Liberation_Sans',sans-serif]">2</div>
      </div>
      <div className="flex-1" />
      <div className="w-[4px] bg-[#2a2a2a] shrink-0" />
    </div>
  );
}

export default function App() {
  return (
    <div className="w-[1366px] h-[768px] relative overflow-hidden flex flex-col bg-[#f0f0f0] text-[12px] font-['Noto_Sans_CJK_SC','Noto_Sans',sans-serif] leading-tight">
      <TopBars />
      <div className="flex mt-[4px] h-[621px] shrink-0">
        <SideNav />
        <div className="w-[1200px] pl-[4px] flex flex-col shrink-0">
          {/* 编辑工具栏 */}
          <div className={`${bar} h-[23px] w-[789px] ml-[1px] pl-[3px] gap-[7px]`}>
            <Handle />
            <Tool icon="brush" label="删除" gray cn="-ml-[1px]" /><Sep />
            <Tool icon="copyc" label="复制" gray />
            <Tool icon="mirror" label="镜像" gray /><Sep />
            <Tool icon="move" label="移动" gray />
            <Tool icon="rotg" label="旋转" gray /><Sep />
            <Tool icon="extend" label="延伸" gray />
            <Tool icon="trim" label="修剪" gray /><Sep />
            <Tool icon="brk" label="打断" gray />
            <Tool icon="merge" label="合并" gray />
            <Tool icon="split" label="分割" gray /><Sep />
            <Tool icon="align" label="对齐" gray arrow />
            <Tool icon="offset" label="偏移" gray cn="-ml-[2px]" />
            <Tool icon="stretch" label="拉伸" gray /><Sep />
            <Tool icon="grip" label="设置夹点" gray cn="-ml-[2px]" />
          </div>
          <div className="flex h-[26px] mt-[4px] shrink-0">
            <div className={`${bar} h-[26px] w-[567px] ml-[1px] pl-[3px]`}>
              <Handle />
              <div className="flex gap-[3px] ml-[5px]">
                <Select w="w-[56px]" label="首层" />
                <Select w="w-[67px]" label="自定义" />
                <div className="ml-[1px]"><Select w="w-[68px]" label="自定义线" /></div>
                <div className="ml-[1px]"><Select w="w-[70px]" label="ZDYX-10" /></div>
              </div>
              <div className="w-px h-[18px] bg-[#bdbdbd] ml-[5px]" />
              <div className="flex items-center gap-[7px] ml-[4px]">
                <Tool icon="prop" label="属性" cn="-mr-[1px]" />
                <div className={active + ' flex items-center'}><Tool icon="edit" label="编辑钢筋" /></div>
                <Tool icon="list" label="构件列表" />
                <Tool icon="pick" label="拾取构件" />
              </div>
            </div>
            <div className={`${bar} h-[26px] w-[421px] ml-[32px] pl-[2px] gap-[7px]`}>
              <Handle />
              <Tool icon="twop" label="两点" cn="-ml-[1px]" />
              <Tool icon="para" label="平行" />
              <Tool icon="angle" label="点角" arrow />
              <Tool icon="arc3" label="三点辅轴" arrow />
              <Tool icon="erase" label="删除辅轴" />
              <Tool icon="dim" label="尺寸标注" arrow />
            </div>
          </div>
          <div className={`${bar} h-[20px] w-[31px] ml-[413px] mt-[3px] pl-[3px]`}><Handle /></div>
          <div className={`${bar} h-[26px] w-[488px] ml-[1px] mt-[6px] pl-[4px] gap-[7px]`}>
            <Handle />
            <Tool icon="cursor" label="选择" arrow cn="-ml-[3px]" /><Sep />
            <Tool icon="linea" label="直线" />
            <Tool icon="ptadd" label="点加长度" />
            <Tool icon="arc" label="三点画弧" arrow />
            <div className="-ml-[2px] flex items-center"><Select w="w-[56px]" /></div>
            <Tool icon="rect" label="矩形" cn="-ml-[2px]" /><Sep />
            <Tool icon="smart" label="智能布置" arrow />
          </div>
          {/* 三维视图 */}
          <div className="mt-[2px] h-[279px] w-[1196px] relative shrink-0">
            <Scene />
            <RebarPanel />
          </div>
          <SnapBar />
          <GridPanel />
        </div>
      </div>
      <StatusBar />
      <Taskbar />
      {/* 悬浮球 */}
      <div className="absolute left-[463px] -top-[24px] w-[44px] h-[44px] rounded-full bg-[#3bb33b] border-2 border-white shadow-[0_2px_4px_rgba(0,0,0,.5)] flex items-end justify-center pb-[6px] text-white text-[12px] font-bold">71</div>
    </div>
  );
}
